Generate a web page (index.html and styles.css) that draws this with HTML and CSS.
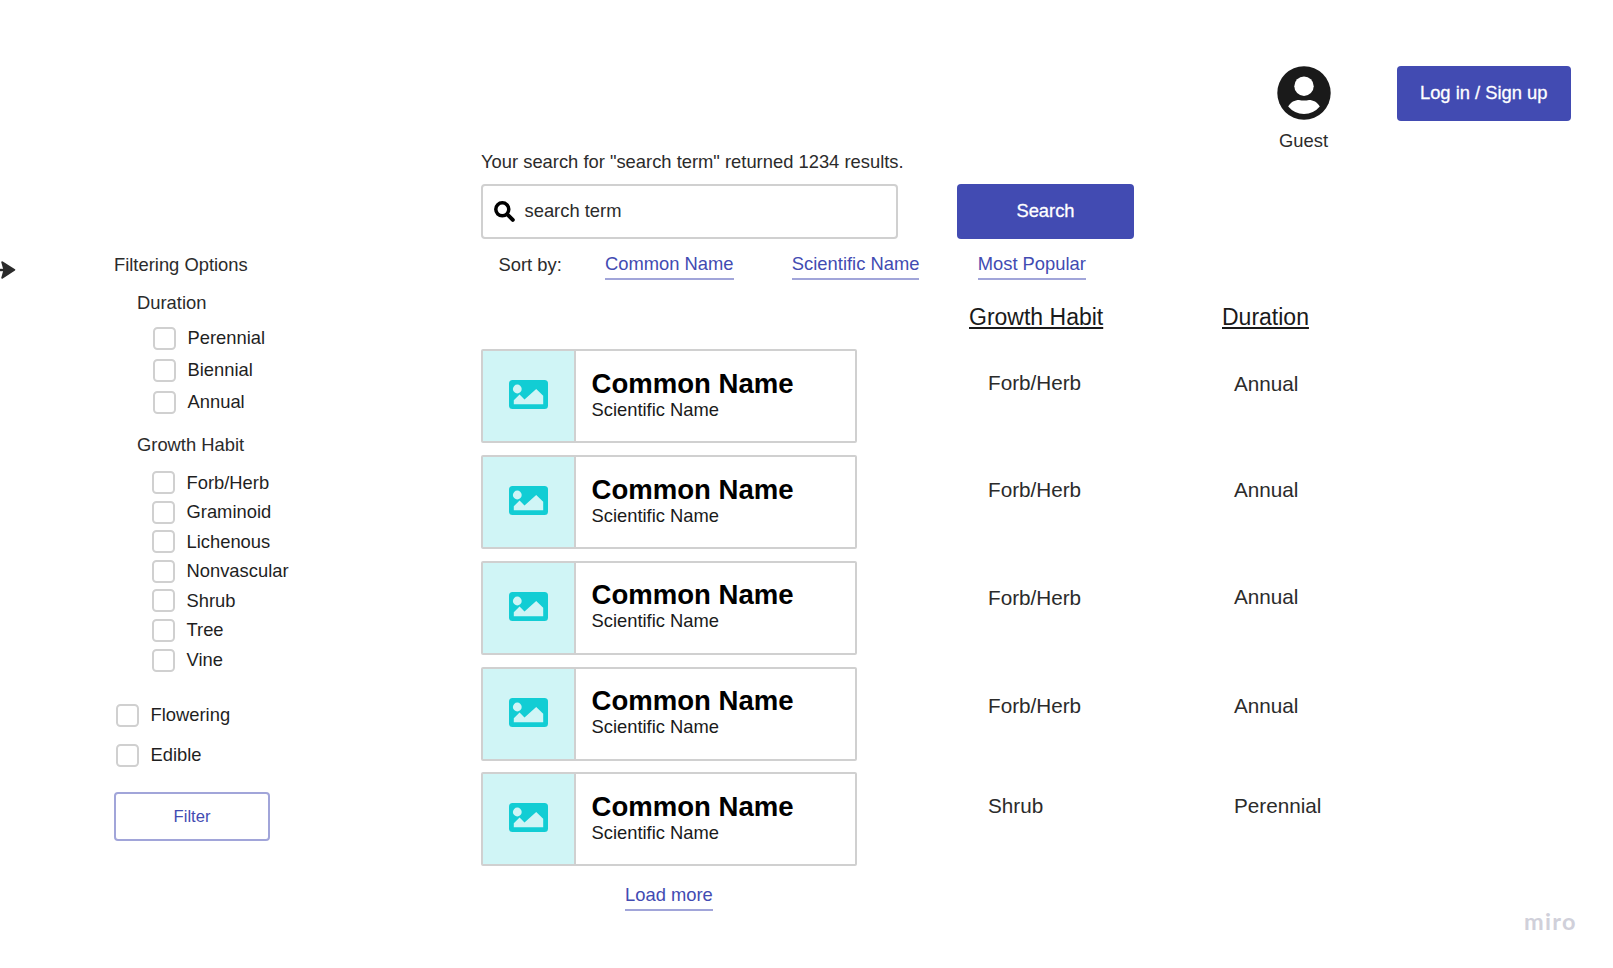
FILE: index.html
```html
<!DOCTYPE html>
<html lang="en">
<head>
<meta charset="utf-8">
<title>Plant search</title>
<link rel="stylesheet" href="styles.css">
</head>
<body>
<svg width="0" height="0" class="sprite" aria-hidden="true">
  <symbol id="picture" viewBox="0 0 39 29">
    <rect width="39" height="29" rx="3.5" fill="#12cdd4"/>
    <circle cx="8.3" cy="9" r="4.4" fill="#d0f5f6"/>
    <path d="M4.8 24.3v-4.1l5.8-5.6 4.9 4.9L27.2 9l7 6.8v8.5z" fill="#d0f5f6"/>
  </symbol>
</svg>
<svg class="arrow" viewBox="0 0 16 20"><path d="M0 10h5" stroke="#2b2b2b" stroke-width="2.400"/><path d="M1.200 2Q1.600 1 2.800 1.500L15 9.3q.8.6 0 1.200L2.800 18.600q-1.200.5-1.600-.500L3.400 10z" fill="#2b2b2b"/></svg>

<header class="header">
  <div class="user">
    <svg class="avatar" viewBox="0 0 54 54"><circle cx="27" cy="27" r="26.7" fill="#1a1a1a"/><circle cx="27" cy="20.2" r="9.7" fill="#fff"/><path d="M11.2 40.6C13.500 36 18 34 22 34Q27 35 32 34C36 34 40.500 36 42.800 40.600Q36.500 48 27 48T11.200 40.600z" fill="#fff"/></svg>
    <span>Guest</span>
  </div>
  <button class="btn login">Log in / Sign up</button>
</header>

<div class="layout">
  <aside class="filters">
    <div>Filtering Options</div>
    <div class="group duration">
      <div>Duration</div>
      <div class="options">
        <label class="option"><i class="box"></i><span>Perennial</span></label>
        <label class="option"><i class="box"></i><span>Biennial</span></label>
        <label class="option"><i class="box"></i><span>Annual</span></label>
      </div>
    </div>
    <div class="group habit">
      <div>Growth Habit</div>
      <div class="options">
        <label class="option"><i class="box"></i>Forb/Herb</label>
        <label class="option"><i class="box"></i>Graminoid</label>
        <label class="option"><i class="box"></i>Lichenous</label>
        <label class="option"><i class="box"></i>Nonvascular</label>
        <label class="option"><i class="box"></i>Shrub</label>
        <label class="option"><i class="box"></i>Tree</label>
        <label class="option"><i class="box"></i>Vine</label>
      </div>
    </div>
    <div class="flags">
      <label class="option"><i class="box"></i><span>Flowering</span></label>
      <label class="option"><i class="box"></i><span>Edible</span></label>
    </div>
    <button class="filter-btn">Filter</button>
  </aside>

  <main class="main">
    <div class="summary">Your search for "search term" returned 1234 results.</div>
    <div class="search-row">
      <div class="search-box">
        <svg class="search-icon" viewBox="0 0 21 21"><circle cx="8.300" cy="8.300" r="6.500" fill="none" stroke="#000" stroke-width="3.500"/><path d="M13.300 13.300l5.500 5.500" stroke="#000" stroke-width="4" stroke-linecap="round"/></svg>
        <span>search term</span>
      </div>
      <button class="btn search-btn">Search</button>
    </div>
    <nav class="sort">
      <span class="sort-label">Sort by:</span>
      <a class="link common">Common Name</a>
      <a class="link scientific">Scientific Name</a>
      <a class="link">Most Popular</a>
    </nav>
    <div class="heads"><span class="head-habit">Growth Habit</span><span>Duration</span></div>
    <div class="results">
      <div class="row">
        <article class="card"><div class="thumb"><svg><use href="#picture"/></svg></div><div class="names"><h2>Common Name</h2><p>Scientific Name</p></div></article>
        <span class="cell habit-cell">Forb/Herb</span><span class="cell low">Annual</span>
      </div>
      <div class="row second">
        <article class="card"><div class="thumb"><svg><use href="#picture"/></svg></div><div class="names"><h2>Common Name</h2><p>Scientific Name</p></div></article>
        <span class="cell habit-cell">Forb/Herb</span><span class="cell">Annual</span>
      </div>
      <div class="row third">
        <article class="card"><div class="thumb"><svg><use href="#picture"/></svg></div><div class="names"><h2>Common Name</h2><p>Scientific Name</p></div></article>
        <span class="cell habit-cell low">Forb/Herb</span><span class="cell">Annual</span>
      </div>
      <div class="row fourth">
        <article class="card"><div class="thumb"><svg><use href="#picture"/></svg></div><div class="names"><h2>Common Name</h2><p>Scientific Name</p></div></article>
        <span class="cell habit-cell">Forb/Herb</span><span class="cell">Annual</span>
      </div>
      <div class="row fifth">
        <article class="card"><div class="thumb"><svg><use href="#picture"/></svg></div><div class="names"><h2>Common Name</h2><p>Scientific Name</p></div></article>
        <span class="cell habit-cell">Shrub</span><span class="cell">Perennial</span>
      </div>
    </div>
    <a class="link more">Load more</a>
  </main>
</div>
<div class="brand">miro</div>
</body>
</html>
```
FILE: styles.css
```css
* { box-sizing: border-box; }
body {
  margin: 0;
  height: 968px;
  overflow: hidden;
  position: relative;
  background: #fff;
  color: #2b2b2b;
  font: 18.36px/20px "Liberation Sans", Arial, sans-serif;
  white-space: nowrap;
}
.sprite { position: absolute; }
.arrow { position: absolute; left: 0; top: 260px; width: 16px; height: 20px; }

.header {
  height: 152px;
  padding: 65.5px 42.500px 0 0;
  display: flex;
  justify-content: flex-end;
  align-items: flex-start;
  gap: 66px;
}
.user { display: flex; flex-direction: column; align-items: center; gap: 11px; }
.user span { margin-right: 1px; }
.avatar { width: 54px; height: 54px; }
.btn {
  height: 55px;
  border: 0;
  border-radius: 4px;
  background: #424bb2;
  color: #fff;
  font: inherit;
  padding: 0;
  -webkit-text-stroke: 0.3px #fff;
}
.login { width: 173.500px; }

.layout { display: flex; align-items: flex-start; }
.filters { width: 481px; flex: none; padding: 103px 0 0 114px; }
.group { padding-left: 23px; }
.duration { margin-top: 18px; }
.habit { margin-top: 21px; }
.options { display: flex; flex-direction: column; }
.option { display: flex; align-items: center; gap: 11.500px; height: 23px; color: #1f1f1f; }
.option span { padding-bottom: 2px; }
.box { width: 23px; height: 23px; border: 2px solid #d0d0d0; border-radius: 4.500px; flex: none; }
.duration .options { padding-left: 16px; margin-top: 14px; gap: 9px; }
.habit .options { padding-left: 15px; margin-top: 16px; gap: 6.600px; }
.flags { margin: 32.500px 0 0 2px; display: flex; flex-direction: column; gap: 17px; }
.filter-btn {
  display: block;
  width: 156px;
  height: 49px;
  margin-top: 25px;
  border: 2px solid #a1a5d9;
  border-radius: 4px;
  background: #fff;
  color: #424bb2;
  font: 16.600px/20px "Liberation Sans", Arial, sans-serif;
  padding: 0;
}

.main { flex: 1; }
.search-row { display: flex; margin-top: 12px; }
.search-box {
  width: 417px;
  height: 55px;
  border: 2px solid #d0d0d0;
  border-radius: 4px;
  display: flex;
  align-items: center;
  gap: 9.500px;
  padding-left: 11px;
}
.search-box span { padding-bottom: 2px; }
.search-icon { width: 21px; height: 21px; }
.search-btn { width: 177px; margin-left: 59px; padding-bottom: 1px; }
.sort { display: flex; align-items: flex-start; padding: 15px 0 0 17.500px; height: 41px; }
.sort-label { width: 106.500px; padding-top: 1px; }
.link { color: #424bb2; border-bottom: 2px solid #a1a5d9; padding-bottom: 4px; }
.common, .scientific { margin-right: 58.300px; }
.heads {
  display: flex;
  margin-top: 24px;
  padding-left: 488px;
  font-size: 23px;
  line-height: 26px;
  color: #1a1a1a;
  text-decoration: underline;
  text-decoration-thickness: 1.500px;
  text-underline-offset: 2px;
}
.head-habit { width: 253px; }
.results { margin-top: 19px; display: flex; flex-direction: column; gap: 11.850px; }
.row { display: flex; height: 94px; align-items: flex-start; }
.card { width: 376px; height: 94px; border: 2px solid #d0d0d0; border-radius: 2px; display: flex; }
.thumb {
  width: 92.500px;
  background: #d0f5f6;
  border-right: 2px solid #d0d0d0;
  display: flex;
  align-items: center;
  justify-content: center;
  padding-bottom: 3px;
}
.thumb svg { width: 39px; height: 29px; }
.names { padding: 17.500px 0 0 16px; }
.names h2 { margin: 0; font-size: 27.550px; line-height: 30px; color: #000; }
.names p { margin: 1px 0 0; color: #1a1a1a; }
.second .names { padding-top: 18.200px; }
.third .names, .fourth .names, .fifth .names { padding-top: 17.500px; }
.cell { font-size: 20.700px; line-height: 24px; padding-top: 22px; }
.habit-cell { width: 246px; margin-left: 131px; }
.row .low { padding-top: 23px; }
.second .cell { padding-top: 23px; }
.third .cell { padding-top: 24px; }
.third .low { padding-top: 25px; }
.fourth .cell { padding-top: 27.500px; }
.fifth .cell { padding-top: 21.500px; }
.more { display: inline-block; margin: 18.300px 0 0 144px; }
.brand {
  position: absolute;
  left: 1524px;
  top: 907px;
  font: 700 23.500px/28px Lato, sans-serif;
  letter-spacing: 1.300px;
  color: #d0d0da;
}
```
